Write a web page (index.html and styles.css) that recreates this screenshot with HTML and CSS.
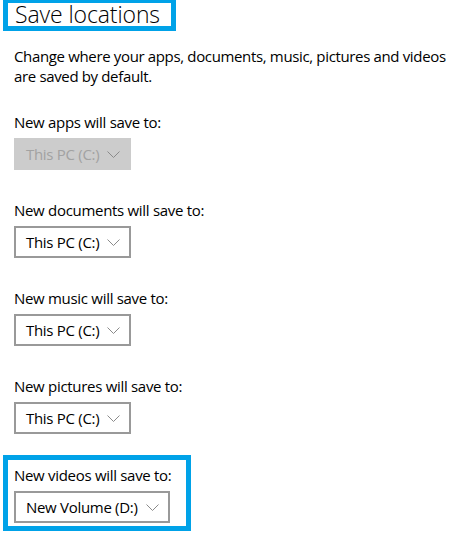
FILE: index.html
```html
<!DOCTYPE html>
<html lang="en">
<head>
  <meta charset="UTF-8">
  <title>Save locations</title>
  <link rel="stylesheet" href="styles.css">
</head>
<body>
  <div class="page">
    <div class="title-box">
      <h1>Save locations</h1>
    </div>

    <p class="intro">Change where your apps, documents, music, pictures and videos<br>are saved by default.</p>

    <div class="group">
      <div class="label">New apps will save to:</div>
      <div class="select disabled">
        <span>This PC (C:)</span>
        <svg class="chev" width="13" height="7" viewBox="0 0 13 7"><polyline points="0.5,0.5 6.5,6.5 12.5,0.5" /></svg>
      </div>
    </div>

    <div class="group">
      <div class="label">New documents will save to:</div>
      <div class="select">
        <span>This PC (C:)</span>
        <svg class="chev" width="13" height="7" viewBox="0 0 13 7"><polyline points="0.5,0.5 6.5,6.5 12.5,0.5" /></svg>
      </div>
    </div>

    <div class="group">
      <div class="label">New music will save to:</div>
      <div class="select">
        <span>This PC (C:)</span>
        <svg class="chev" width="13" height="7" viewBox="0 0 13 7"><polyline points="0.5,0.5 6.5,6.5 12.5,0.5" /></svg>
      </div>
    </div>

    <div class="group">
      <div class="label">New pictures will save to:</div>
      <div class="select">
        <span>This PC (C:)</span>
        <svg class="chev" width="13" height="7" viewBox="0 0 13 7"><polyline points="0.5,0.5 6.5,6.5 12.5,0.5" /></svg>
      </div>
    </div>

    <div class="group highlight">
      <div class="label">New videos will save to:</div>
      <div class="select">
        <span>New Volume (D:)</span>
        <svg class="chev" width="13" height="7" viewBox="0 0 13 7"><polyline points="0.5,0.5 6.5,6.5 12.5,0.5" /></svg>
      </div>
    </div>
  </div>
</body>
</html>
```

FILE: styles.css
```css
/* === Cores === */
:root {
  --destaque: #00a2e8;
  --texto: #000000;
  --borda: #999999;
  --desab-fundo: #cccccc;
  --desab-texto: #a2a2a2;
  --seta: #8a8a8a;
}

* {
  box-sizing: border-box;
  margin: 0;
  padding: 0;
}

body {
  font-family: "Open Sans", "Noto Sans", Arial, sans-serif;
  font-size: 15px;
  color: var(--texto);
  background: #ffffff;
  overflow: hidden;
}

.page {
  padding-left: 3px;
}

/* === Titulo com moldura (borda de cima cortada na captura) === */
.title-box {
  display: inline-block;
  border: 5px solid var(--destaque);
  border-top-width: 3px;
  padding: 0 11px 0 7px;
}
h1 {
  font-weight: 300;
  font-size: 23px;
  line-height: 23px;
  letter-spacing: -0.1px;
}

/* === Texto de introducao === */
.intro {
  margin: 15px 0 0 11px;
  line-height: 20px;
  letter-spacing: -0.35px;
  white-space: nowrap;
}

/* === Grupos (rotulo + lista) === */
.group {
  margin: 26px 0 0 11px;
}
.group + .group {
  margin-top: 30px;
}
.label {
  line-height: 20px;
  letter-spacing: -0.3px;
  margin-bottom: 6px;
}

.select {
  display: inline-flex;
  align-items: center;
  gap: 8px;
  height: 32px;
  border: 2px solid var(--borda);
  padding: 0 9px 0 10px;
  letter-spacing: -0.3px;
}
.select.disabled {
  background: var(--desab-fundo);
  border-color: var(--desab-fundo);
  color: var(--desab-texto);
}
.chev polyline {
  fill: none;
  stroke: var(--seta);
  stroke-width: 1;
}

/* === Destaque do ultimo grupo === */
.group.highlight {
  display: inline-block;
  margin: 21px 0 0 0;
  border: 5px solid var(--destaque);
  padding: 5px 15px 3px 6px;
}
```
